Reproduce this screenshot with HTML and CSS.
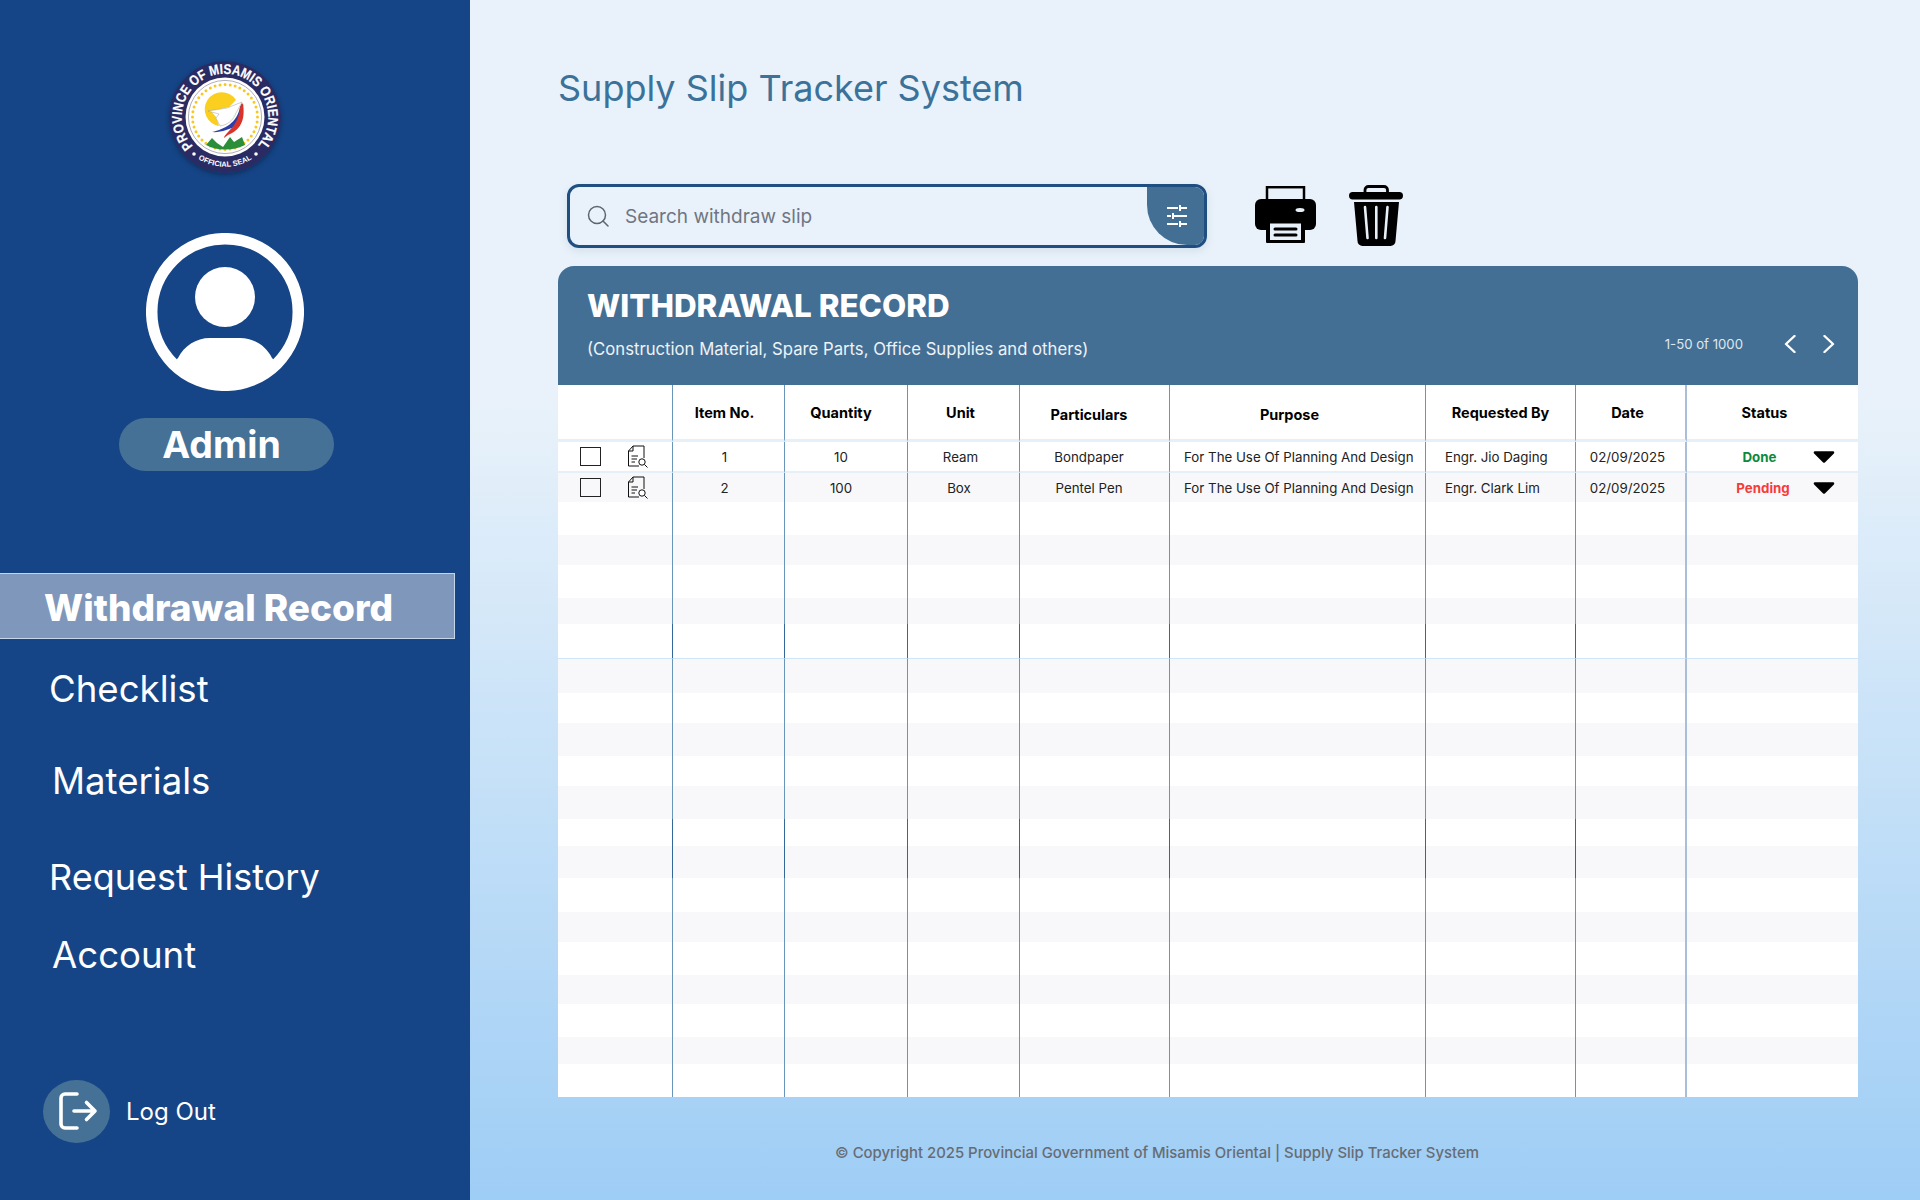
FILE: index.html
```html
<!DOCTYPE html>
<html lang="en">
<head>
    <meta charset="UTF-8">
    <meta name="viewport" content="width=device-width, initial-scale=1.0">
    <title>Supply Slip Tracker System</title>
    <link rel="stylesheet" href="styles.css">
</head>
<body>
    <!-- Sidebar -->
    <aside class="sidebar">
        <svg class="seal" viewBox="-56 -56 112 112" role="img" aria-label="Province of Misamis Oriental seal">
            <defs>
                <path id="seal-top" d="M-32 29 A43.2 43.2 0 1 1 32 29"/>
                <path id="seal-bottom" d="M-29 40.500 A50 50 0 0 0 29 40.500"/>
            </defs>
            <circle r="56" fill="#2a2b63"/>
            <circle r="39.500" fill="#fff"/>
            <circle r="36.600" fill="none" stroke="#9a9aa8" stroke-width="0.800"/>
            <circle r="32.500" fill="none" stroke="#f7c81e" stroke-width="3" stroke-dasharray="0 5.100" stroke-linecap="round"/>
            <text class="seal-text"><textPath href="#seal-top" textLength="198" lengthAdjust="spacingAndGlyphs">PROVINCE OF MISAMIS ORIENTAL</textPath></text>
            <text class="seal-small"><textPath href="#seal-bottom" startOffset="50%" text-anchor="middle">OFFICIAL SEAL</textPath></text>
            <circle cx="-31" cy="37" r="1.800" fill="#fff"/>
            <circle cx="31" cy="37" r="1.800" fill="#fff"/>
            <path d="M11 -17 A17 17 0 1 0 -6 9 L-9 0 L-14 -6 L4 -10 Z" fill="#fbcf1f"/>
            <path d="M-17 -6 L2 -9 L17 -15 L11 -4 C8 4 2 8 -5 9 L-9 1 L-6 -3 Z" fill="#fff" stroke="#8b8b70" stroke-width="0.400"/>
            <path d="M-13 15 C0 12 12 6 15 -10 L17 -14 C18 -5 16 3 11 9 C6 12 -6 16 -13 15 Z" fill="#2c3fa8"/>
            <path d="M-1 21 C0 15 14 10 15 -10 L18 -14 C20 0 18 12 3 18 Z" fill="#d8342c"/>
            <path d="M-19 28 L-13 21 L-8 26 L-2 30 L5 20 L9 25 L17 20 L20 28 C8 34 -8 34 -19 28 Z" fill="#2b8f3a"/>
        </svg>

        <svg class="avatar" viewBox="0 0 158 158">
            <defs>
                <clipPath id="avatar-clip"><circle cx="79" cy="79" r="70"/></clipPath>
            </defs>
            <circle cx="79" cy="79" r="73.300" fill="none" stroke="#fff" stroke-width="11.500"/>
            <circle cx="79" cy="64" r="30" fill="#fff"/>
            <path d="M26 131 L32 125 C38 113 50 105 64 105 H94 C108 105 120 113 126 125 L132 131 V158 H26 Z" fill="#fff" clip-path="url(#avatar-clip)"/>
        </svg>
        <div class="role-pill">Admin</div>

        <nav class="nav">
            <a class="nav-item active">Withdrawal Record</a>
            <a class="nav-item checklist">Checklist</a>
            <a class="nav-item materials">Materials</a>
            <a class="nav-item history">Request History</a>
            <a class="nav-item account">Account</a>
        </nav>

        <a class="logout">
            <span class="logout-icon">
                <svg viewBox="0 0 67 63" width="67" height="63">
                    <path d="M34 14 H22 a4 4 0 0 0 -4 4 V44 a4 4 0 0 0 4 4 H34 M31 31 H52 M43.500 22.500 L52 31 L43.500 39.500" fill="none" stroke="#fff" stroke-width="3.600" stroke-linecap="round" stroke-linejoin="round"/>
                </svg>
            </span>
            Log Out
        </a>
    </aside>

    <main class="main">
        <h1 class="page-title">Supply Slip Tracker System</h1>

        <!-- Search and actions -->
        <div class="toolbar">
            <div class="search">
                <svg class="search-icon" viewBox="0 0 22 22" width="22" height="22">
                    <circle cx="10" cy="10" r="8.500" fill="none" stroke="#5c6570" stroke-width="1.500"/>
                    <path d="M16 16 L21 21" stroke="#5c6570" stroke-width="1.500" stroke-linecap="round"/>
                </svg>
                <span class="search-text">Search withdraw slip</span>
                <div class="filter">
                    <svg viewBox="0 0 20 22" width="20" height="22">
                        <path d="M0 3 H11 M13 0 V6 M13 3 H20 M0 11 H4 M6 8 V14 M6 11 H20 M0 19 H11 M13 16 V22 M13 19 H20" fill="none" stroke="#fff" stroke-width="2"/>
                    </svg>
                </div>
            </div>
            <svg class="printer" viewBox="0 0 61 57" width="61" height="57">
                <rect x="12" y="1.200" width="37" height="16" fill="none" stroke="#000" stroke-width="2.500"/>
                <rect x="0" y="13" width="61" height="31" rx="6" fill="#000"/>
                <ellipse cx="45" cy="24" rx="4.500" ry="2" fill="#e8f1f9"/>
                <rect x="11" y="35" width="39" height="22" rx="1" fill="#000"/>
                <rect x="15" y="37.500" width="31" height="16.500" fill="#e8f1f9"/>
                <path d="M20 43 H41 M20 49 H41" stroke="#000" stroke-width="3" stroke-linecap="round"/>
            </svg>
            <svg class="trash" viewBox="0 0 54 61" width="54" height="61">
                <path d="M16 9 V5 a3.500 3.500 0 0 1 3.500 -3.500 H35 a3.500 3.500 0 0 1 3.500 3.500 V9" fill="none" stroke="#000" stroke-width="2.800"/>
                <rect x="0" y="7" width="54" height="7.500" rx="3.700" fill="#000"/>
                <path d="M5 17 H50 L46.500 56 a5 5 0 0 1 -5 5 H13.500 a5 5 0 0 1 -5 -5 Z" fill="#000"/>
                <path d="M16 22 L18.500 53 M27.300 22 V53 M38.500 22 L36 53" stroke="#e8f1f9" stroke-width="2.600" stroke-linecap="round"/>
            </svg>
        </div>

        <!-- Record panel -->
        <section class="panel">
            <header class="panel-head">
                <div>
                    <h2 class="panel-title">WITHDRAWAL RECORD</h2>
                    <p class="panel-sub">(Construction Material, Spare Parts, Office Supplies and others)</p>
                </div>
                <div class="pager">
                    <span class="pager-count">1-50 of 1000</span>
                    <svg viewBox="0 0 12 18" width="12" height="18"><path d="M10.500 1 L2 9 L10.500 17" fill="none" stroke="#fff" stroke-width="2.400" stroke-linecap="round" stroke-linejoin="round"/></svg>
                    <svg viewBox="0 0 12 18" width="12" height="18"><path d="M1.500 1 L10 9 L1.500 17" fill="none" stroke="#fff" stroke-width="2.400" stroke-linecap="round" stroke-linejoin="round"/></svg>
                </div>
            </header>

            <table class="records">
                <colgroup>
                    <col class="col-select"><col class="col-item"><col class="col-qty"><col class="col-unit"><col class="col-part"><col class="col-purpose"><col class="col-req"><col class="col-date"><col class="col-status">
                </colgroup>
                <thead>
                    <tr>
                        <th></th>
                        <th class="c-item">Item No.</th>
                        <th class="c-qty">Quantity</th>
                        <th class="c-unit">Unit</th>
                        <th class="c-part low">Particulars</th>
                        <th class="c-purpose-head low">Purpose</th>
                        <th class="high">Requested By</th>
                        <th class="c-date high">Date</th>
                        <th class="c-status-head high">Status</th>
                    </tr>
                </thead>
                <tbody>
                    <tr class="row-first">
                        <td><div class="select"><span class="check"></span>
                            <svg class="doc" viewBox="0 0 21 23" width="21" height="23"><path d="M6 1 H17 V13 M6 1 L1.500 6 V21 H12 M6 1 V6 H1.500 M4.500 11 H11 M4.500 14 H10 M4.500 17 H8" fill="none" stroke="#111" stroke-width="1"/><circle cx="15" cy="17" r="3.200" fill="#fff" stroke="#111" stroke-width="1"/><path d="M17.500 19.500 L20.500 22.500" stroke="#111" stroke-width="1"/></svg></div></td>
                        <td class="c-item">1</td>
                        <td class="c-qty">10</td>
                        <td class="c-unit">Ream</td>
                        <td class="c-part">Bondpaper</td>
                        <td class="c-purpose">For The Use Of Planning And Design</td>
                        <td class="c-req">Engr. Jio Daging</td>
                        <td class="c-date">02/09/2025</td>
                        <td><div class="status"><span class="done">Done</span><svg viewBox="0 0 22 12" width="22" height="12"><path d="M2 1.500 H20 L11 10.500 Z" fill="#000" stroke="#000" stroke-width="2.500" stroke-linejoin="round"/></svg></div></td>
                    </tr>
                    <tr class="row-second alt">
                        <td><div class="select"><span class="check"></span>
                            <svg class="doc" viewBox="0 0 21 23" width="21" height="23"><path d="M6 1 H17 V13 M6 1 L1.500 6 V21 H12 M6 1 V6 H1.500 M4.500 11 H11 M4.500 14 H10 M4.500 17 H8" fill="none" stroke="#111" stroke-width="1"/><circle cx="15" cy="17" r="3.200" fill="#fff" stroke="#111" stroke-width="1"/><path d="M17.500 19.500 L20.500 22.500" stroke="#111" stroke-width="1"/></svg></div></td>
                        <td class="c-item">2</td>
                        <td class="c-qty">100</td>
                        <td class="c-unit box">Box</td>
                        <td class="c-part">Pentel Pen</td>
                        <td class="c-purpose">For The Use Of Planning And Design</td>
                        <td class="c-req">Engr. Clark Lim</td>
                        <td class="c-date">02/09/2025</td>
                        <td><div class="status"><span class="pending">Pending</span><svg viewBox="0 0 22 12" width="22" height="12"><path d="M2 1.500 H20 L11 10.500 Z" fill="#000" stroke="#000" stroke-width="2.500" stroke-linejoin="round"/></svg></div></td>
                    </tr>
                    <!-- Empty rows -->
                    <tr class="h33"><td></td><td></td><td></td><td></td><td></td><td></td><td></td><td></td><td></td></tr>
                    <tr class="h30 alt"><td></td><td></td><td></td><td></td><td></td><td></td><td></td><td></td><td></td></tr>
                    <tr class="h33"><td></td><td></td><td></td><td></td><td></td><td></td><td></td><td></td><td></td></tr>
                    <tr class="h26 alt"><td></td><td></td><td></td><td></td><td></td><td></td><td></td><td></td><td></td></tr>
                    <tr class="h34 dark"><td></td><td></td><td></td><td></td><td></td><td></td><td></td><td></td><td></td></tr>
                    <tr class="h35 alt fold"><td></td><td></td><td></td><td></td><td></td><td></td><td></td><td></td><td></td></tr>
                    <tr class="h30"><td></td><td></td><td></td><td></td><td></td><td></td><td></td><td></td><td></td></tr>
                    <tr class="h33 alt"><td></td><td></td><td></td><td></td><td></td><td></td><td></td><td></td><td></td></tr>
                    <tr class="h30"><td></td><td></td><td></td><td></td><td></td><td></td><td></td><td></td><td></td></tr>
                    <tr class="h33 alt"><td></td><td></td><td></td><td></td><td></td><td></td><td></td><td></td><td></td></tr>
                    <tr class="h27 dark"><td></td><td></td><td></td><td></td><td></td><td></td><td></td><td></td><td></td></tr>
                    <tr class="h32 alt dark"><td></td><td></td><td></td><td></td><td></td><td></td><td></td><td></td><td></td></tr>
                    <tr class="h34"><td></td><td></td><td></td><td></td><td></td><td></td><td></td><td></td><td></td></tr>
                    <tr class="h30 alt"><td></td><td></td><td></td><td></td><td></td><td></td><td></td><td></td><td></td></tr>
                    <tr class="h33"><td></td><td></td><td></td><td></td><td></td><td></td><td></td><td></td><td></td></tr>
                    <tr class="h29 alt"><td></td><td></td><td></td><td></td><td></td><td></td><td></td><td></td><td></td></tr>
                    <tr class="h33"><td></td><td></td><td></td><td></td><td></td><td></td><td></td><td></td><td></td></tr>
                    <tr class="h27 alt"><td></td><td></td><td></td><td></td><td></td><td></td><td></td><td></td><td></td></tr>
                    <tr class="h33"><td></td><td></td><td></td><td></td><td></td><td></td><td></td><td></td><td></td></tr>
                </tbody>
            </table>
        </section>

        <footer class="footer">© Copyright 2025 Provincial Government of Misamis Oriental | Supply Slip Tracker System</footer>
    </main>
</body>
</html>
```

FILE: styles.css
```css
* {
    box-sizing: border-box;
}
html, body {
    height: 100%;
}
body {
    margin: 0;
    display: flex;
    height: 1200px;
    overflow: hidden;
    font-family: Inter, "Liberation Sans", sans-serif;
    background: linear-gradient(180deg, #e9f2fa 33%, #9ecdf5 100%);
}

/* Sidebar */
.sidebar {
    width: 470px;
    flex-shrink: 0;
    height: 100%;
    background-color: #154587;
    color: white;
    display: flex;
    flex-direction: column;
    align-items: flex-start;
    padding-top: 61px;
}
.seal {
    width: 112px;
    height: 112px;
    margin-left: 169px;
    border-radius: 50%;
    box-shadow: 0 2px 5px rgba(0, 0, 0, 0.3);
}
.seal-text {
    font-family: "Liberation Sans", sans-serif;
    font-weight: bold;
    font-size: 14px;
    fill: #fff;
    stroke: #fff;
    stroke-width: 0.2px;
}
.seal-small {
    font-family: "Liberation Sans", sans-serif;
    font-weight: bold;
    font-size: 7.5px;
    fill: #fff;
}
.avatar {
    width: 158px;
    height: 158px;
    margin: 60px 0 0 146px;
}
.role-pill {
    width: 215px;
    height: 53px;
    margin: 27px 0 0 119px;
    padding-right: 10px;
    border-radius: 27px;
    background-color: #467196;
    font-size: 37.5px;
    font-weight: 700;
    line-height: 53px;
    text-align: center;
}
.nav {
    width: 100%;
    margin-top: 102px;
    display: flex;
    flex-direction: column;
}
.nav-item {
    display: block;
    height: 50px;
    font-size: 36.6px;
    line-height: 50px;
    white-space: nowrap;
}
.nav-item.active {
    width: 455px;
    height: 66px;
    padding-left: 44px;
    font-size: 37px;
    font-weight: 800;
    line-height: 68px;
    background-color: #7f97bb;
    border: 1px solid #c5d6ea;
    border-left: none;
}
.checklist {
    margin: 25px 0 0 49px;
}
.materials {
    margin: 42px 0 0 52px;
}
.nav-item.history {
    margin: 46px 0 0 49px;
    font-size: 36px;
}
.account {
    margin: 28px 0 0 52px;
}
.logout {
    margin: auto 0 57px 43px;
    display: flex;
    align-items: center;
    gap: 16px;
    font-size: 24px;
}
.logout-icon {
    width: 67px;
    height: 63px;
    border-radius: 50%;
    background-color: #467196;
}
.logout-icon svg {
    display: block;
}

/* Main area */
.main {
    flex: 1;
    padding: 63px 0 0 88px;
}
.page-title {
    margin: 0;
    font-size: 36px;
    font-weight: 400;
    line-height: 50px;
    color: #3c7299;
}
.toolbar {
    margin: 71px 0 0 9px;
    display: flex;
    align-items: center;
}
.search {
    width: 640px;
    height: 64px;
    border: 3px solid #1f4e80;
    border-radius: 12px;
    display: flex;
    align-items: center;
    padding-left: 17px;
    overflow: hidden;
    box-shadow: 0 3px 8px rgba(60, 90, 130, 0.12);
}
.search-text {
    margin-left: 16px;
    flex: 1;
    font-size: 19px;
    color: #6f7682;
}
.filter {
    width: 57px;
    height: 100%;
    background-color: #446f95;
    border-bottom-left-radius: 40px;
    display: flex;
    align-items: center;
    justify-content: center;
    padding-left: 3px;
}
.printer {
    margin: 0 0 3px 48px;
}
.trash {
    margin: 0 0 2px 33px;
}

/* Record panel */
.panel {
    width: 1300px;
    margin-top: 18px;
}
.panel-head {
    height: 119px;
    padding: 20px 23px 0 29px;
    background-color: #446f95;
    border-radius: 16px 16px 0 0;
    color: white;
    display: flex;
    justify-content: space-between;
}
.panel-title {
    margin: 0;
    font-size: 31.4px;
    font-weight: 800;
    line-height: 40px;
}
.panel-sub {
    margin: 12px 0 0;
    font-size: 16.7px;
    line-height: 22px;
    color: #eef3f8;
}
.pager {
    display: flex;
    align-items: center;
    height: 18px;
    margin-top: 49px;
    gap: 27px;
}
.pager-count {
    margin-right: 14px;
    font-size: 13.2px;
    color: #dfe7ee;
}

/* Table */
.records {
    width: 1300px;
    table-layout: fixed;
    border-collapse: separate;
    border-spacing: 0;
    background-color: white;
}
.col-select { width: 115px; }
.col-item { width: 112px; }
.col-qty { width: 123px; }
.col-unit { width: 112px; }
.col-part { width: 150px; }
.col-purpose { width: 256px; }
.col-req { width: 150px; }
.col-date { width: 111px; }
.col-status { width: 171px; }

.records th, .records td {
    padding: 0;
    border-right: 1px solid #6a95ba;
    text-align: center;
    white-space: nowrap;
}
.records th:nth-child(8), .records td:nth-child(8) {
    border-right: 2px solid #a9bfd8;
}
.records th:last-child, .records td:last-child {
    border-right: none;
}
.records th {
    height: 57px;
    padding-top: 1px;
    font-size: 14.5px;
    font-weight: 700;
    color: #000;
    border-bottom: 3px solid #e6f0f8;
}
.records th.low {
    padding-top: 4px;
}
.records th.high {
    padding-top: 0;
}
.records td {
    font-size: 13.3px;
    color: #222;
}
.row-first td {
    height: 31px;
    border-bottom: 2px solid #e6f0f8;
}
.row-second td {
    height: 29px;
}
.alt td {
    background-color: #f8f8fa;
}
.fold td {
    border-top: 1px solid #cfe6f8;
}
.dark td {
    border-right-color: #33699a;
}
.h26 td { height: 26px; }
.h27 td { height: 27px; }
.h29 td { height: 29px; }
.h30 td { height: 30px; }
.h32 td { height: 32px; }
.h33 td { height: 33px; }
.h34 td { height: 34px; }
.h35 td { height: 35px; }

.records .c-item { padding-right: 8px; }
.records .c-qty { padding-right: 10px; }
.records .c-unit { padding-right: 6px; }
.records .c-unit.box { padding-right: 9px; }
.records .c-part { padding-right: 11px; }
.records .c-purpose-head { padding-right: 16px; }
.records .c-purpose { padding-left: 14px; text-align: left; }
.records .c-req { padding-left: 19px; text-align: left; }
.records .c-date { padding-right: 6px; }
.records .c-status-head { padding-right: 16px; }

.select {
    display: flex;
    align-items: center;
    gap: 26px;
    padding-left: 22px;
}
.check {
    width: 21px;
    height: 19px;
    border: 1px solid #222;
}
.status {
    display: flex;
    align-items: center;
    padding-left: 26px;
}
.status span {
    width: 100px;
    font-weight: 700;
    text-align: center;
}
.status .done {
    color: #0b8a3b;
    padding-right: 7px;
}
.status .pending {
    color: #f63b3b;
}

.footer {
    width: 1300px;
    margin-top: 47px;
    padding-right: 102px;
    font-size: 14.9px;
    font-weight: 500;
    color: #676c74;
    text-align: center;
}
```
